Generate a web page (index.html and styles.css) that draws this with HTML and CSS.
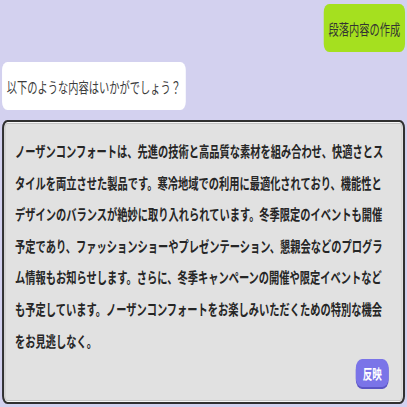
FILE: index.html
```html
<!DOCTYPE html>
<html lang="ja">
<head>
    <meta charset="UTF-8">
    <meta name="viewport" content="width=device-width, initial-scale=1.0">
    <title>段落内容の作成</title>
    <link rel="stylesheet" href="styles.css">
</head>
<body>
    <div class="frame">
        <div class="chat">
            <div class="msg user">
                <div class="bubble">段落内容の作成</div>
            </div>
            <div class="msg bot">
                <div class="bubble">以下のような内容はいかがでしょう？</div>
            </div>
            <div class="draft">
                <p class="draft-text">ノーザンコンフォートは、先進の技術と高品質な素材を組み合わせ、快適さとスタイルを両立させた製品です。寒冷地域での利用に最適化されており、機能性とデザインのバランスが絶妙に取り入れられています。冬季限定のイベントも開催予定であり、ファッションショーやプレゼンテーション、懇親会などのプログラム情報もお知らせします。さらに、冬季キャンペーンの開催や限定イベントなども予定しています。ノーザンコンフォートをお楽しみいただくための特別な機会をお見逃しなく。</p>
                <div class="actions">
                    <button class="apply">反映</button>
                </div>
            </div>
        </div>
    </div>
</body>
</html>
```

FILE: styles.css
```css
body { margin: 0; background: #d3d1ef; font-family: "Noto Sans CJK JP", "Noto Sans", sans-serif; }
.frame { width: 100%; height: 407px; overflow: hidden; }
.chat { width: 596px; padding: 4px 3px 0; box-sizing: border-box; transform: scaleX(0.683); transform-origin: 0 0; }
.msg { display: flex; margin-bottom: 10px; }
.msg.user { justify-content: flex-end; }
.bubble { height: 48px; display: flex; align-items: center; padding: 0 7px; border-radius: 8px; font-size: 15px; color: #3c3c3c; }
.user .bubble { background: #a5e01f; color: #333; }
.bot .bubble { background: #fff; }
.draft { height: 284px; box-sizing: border-box; background: #e1e1e1; border: solid #303030; border-width: 2px 3px; border-radius: 8px; box-shadow: inset 0 0 0 1px #f7f7f7, inset 0 0 0 2px #c4c4c4; padding: 13px 21px 0 16px; }
.draft-text { margin: 0; font-size: 15px; font-weight: bold; line-height: 31.6px; color: #262626; }
.actions { display: flex; justify-content: flex-end; margin-top: 3px; }
.apply { width: 48px; height: 28px; border: none; border-radius: 9px; background: #7a74e8; box-shadow: 0 2px 0 #5b55c4; color: #fff; font-family: inherit; font-size: 14px; font-weight: bold; padding: 0; cursor: pointer; }
```
